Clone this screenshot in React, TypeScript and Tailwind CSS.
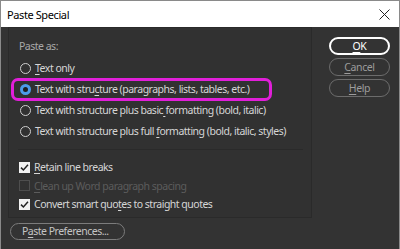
import React from "react";

const font = { fontFamily: '"Noto Sans", "Open Sans", sans-serif' };

function U({ children }: { children: React.ReactNode }) {
  return <span className="underline underline-offset-[2px]">{children}</span>;
}

function Radio({ checked }: { checked?: boolean }) {
  return checked ? (
    <span className="w-[11px] h-[11px] rounded-full border-[3px] border-[#4c9be9] bg-[#1f1f1f] shrink-0" />
  ) : (
    <span className="w-[11px] h-[11px] rounded-full border border-[#cfcfcf] shrink-0" />
  );
}

function Check({ checked, disabled }: { checked?: boolean; disabled?: boolean }) {
  if (disabled)
    return <span className="w-[11px] h-[11px] border border-[#4e4e4e] shrink-0" />;
  return (
    <span className="w-[11px] h-[11px] bg-[#f2f2f2] flex items-center justify-center shrink-0">
      {checked && (
        <svg width="9" height="9" viewBox="0 0 9 9">
          <path d="M1 4.6 L3.4 7 L8 1.8" stroke="#222" strokeWidth="1.5" fill="none" />
        </svg>
      )}
    </span>
  );
}

export default function App() {
  return (
    <div
      className="w-[400px] h-[249px] bg-[#333333] border-t border-r border-l border-[#8a8a8a] flex flex-col overflow-hidden text-[10.5px] leading-none"
      style={font}
    >
      <div className="h-[26px] bg-white flex items-center justify-between pl-[6px] pr-[9px] shrink-0">
        <span className="text-[11px] text-black tracking-[-0.4px]">Paste Special</span>
        <svg width="11" height="11" viewBox="0 0 11 11">
          <path d="M0.5 0.5 L10.5 10.5 M10.5 0.5 L0.5 10.5" stroke="#222" strokeWidth="1" />
        </svg>
      </div>
      <div className="flex pl-[7px]">
        <div className="flex flex-col">
          <div className="w-[304px] h-[191px] border border-[#2a2a2a] bg-[#313131] flex flex-col tracking-[-0.5px]">
            <div className="h-[16px] mt-[10px] pl-[10px] flex items-center text-[#a9a9a9]">Paste as:</div>
            <div className="flex flex-col mt-[4px] text-[#d6d6d6]">
              <div className="h-[21px] flex items-center gap-[4px] pl-[11px]">
                <Radio />
                <span><U>T</U>ext only</span>
              </div>
              <div className="h-[21px] flex items-center gap-[4px] pl-[11px] relative">
                <div className="absolute left-[2px] top-[-1px] w-[261px] h-[23px] border-[3px] border-[#e11fd9] rounded-[7px]" />
                <Radio checked />
                <span>Text with stru<U>c</U>ture (paragraphs, lists, tables, etc.)</span>
              </div>
              <div className="h-[21px] flex items-center gap-[4px] pl-[11px]">
                <Radio />
                <span>Text with structure plus basic<U>{"\u00a0"}</U>formatting (bold, italic)</span>
              </div>
              <div className="h-[21px] flex items-center gap-[4px] pl-[11px]">
                <Radio />
                <span>Text with structure plus full <U>f</U>ormatting (bold, italic, styles)</span>
              </div>
            </div>
            <div className="mt-[7px] ml-[9px] w-[285px] h-px bg-[#2a2a2a]" />
            <div className="flex flex-col mt-[8px]">
              <div className="h-[18.5px] flex items-center gap-[4px] pl-[10px] text-[#d6d6d6]">
                <Check checked />
                <span><U>R</U>etain line breaks</span>
              </div>
              <div className="h-[18.5px] flex items-center gap-[4px] pl-[10px] text-[#5c5c5c]">
                <Check disabled />
                <span><U>C</U>lean up Word paragraph spacing</span>
              </div>
              <div className="h-[18.5px] flex items-center gap-[4px] pl-[10px] text-[#d6d6d6]">
                <Check checked />
                <span>Convert smart quo<U>t</U>es to straight quotes</span>
              </div>
            </div>
          </div>
          <div className="mt-[5px] ml-[2px] w-[115px] h-[17px] rounded-full border border-[#7c7c7c] flex items-center pl-[11px] text-[#c4c4c4] tracking-[-0.5px]">
            P<U>a</U>ste Preferences...
          </div>
        </div>
        <div className="flex flex-col gap-[3px] ml-[17px] mt-[10px] tracking-[-0.4px]">
          <div className="w-[61px] h-[18px] rounded-full border-2 border-white flex items-center justify-center text-white">
            <U>O</U>K
          </div>
          <div className="w-[61px] h-[18px] rounded-full border border-[#6c6c6c] flex items-center justify-center text-[#9c9c9c]">
            <U>C</U>ancel
          </div>
          <div className="w-[61px] h-[18px] rounded-full border border-[#6c6c6c] flex items-center justify-center text-[#9c9c9c]">
            <U>H</U>elp
          </div>
        </div>
      </div>
    </div>
  );
}
